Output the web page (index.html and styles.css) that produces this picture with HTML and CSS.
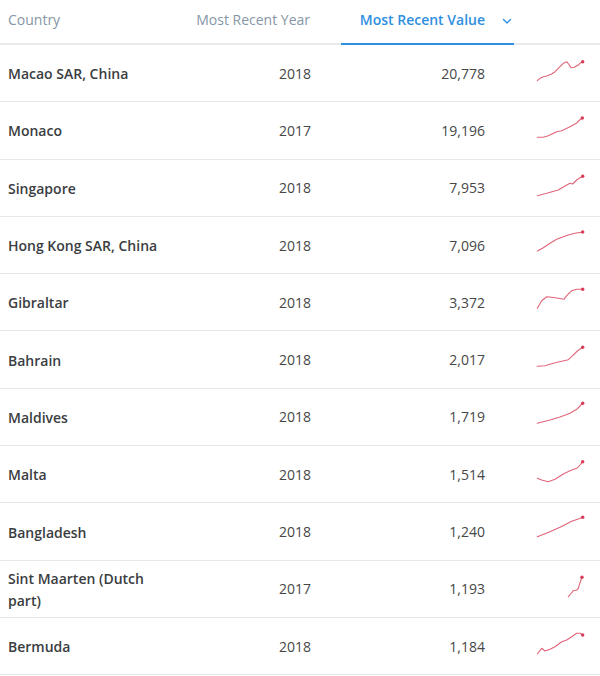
FILE: index.html
```html
<!DOCTYPE html>
<html lang="en">
<head>
<meta charset="utf-8">
<title>Most Recent Value</title>
<link rel="stylesheet" href="styles.css">
</head>
<body>
<div class="table">
  <div class="row head">
    <div class="cell country-h">Country</div>
    <div class="cell year-h">Most Recent Year</div>
    <div class="cell value-h active">Most Recent Value
      <svg class="chev" width="10" height="7" viewBox="0 0 10 7"><path d="M1.5 1.5l3.5 3.5 3.5-3.5" fill="none" stroke="#2f8fe0" stroke-width="1.4" stroke-linecap="round" stroke-linejoin="round"/></svg>
    </div>
    <div class="cell spark-h"></div>
  </div>

  <div class="row">
    <div class="cell country">Macao SAR, China</div>
    <div class="cell year">2018</div>
    <div class="cell value">20,778</div>
    <div class="cell spark"><svg viewBox="0 0 52 50" width="52" height="50"><polyline points="3.3,35.7 6,33.3 9.3,31.7 12.7,31 17.7,29 21,26.7 24.3,23.3 29.3,18.3 32.7,16.7 35.3,20 37,22.7 40.3,22.3 44.3,20 46,18.3 48.7,16.7"/><circle cx="48.7" cy="16.7" r="1.7"/></svg></div>
  </div>
  <div class="row">
    <div class="cell country">Monaco</div>
    <div class="cell year">2017</div>
    <div class="cell value">19,196</div>
    <div class="cell spark"><svg viewBox="0 0 52 50" width="52" height="50"><polyline points="3.3,35.3 9.3,35.3 14.3,33.7 22.7,29.7 27.7,28.7 36,24.7 42.7,21 46,17.7 48.3,16"/><circle cx="48.3" cy="16" r="1.7"/></svg></div>
  </div>
  <div class="row">
    <div class="cell country">Singapore</div>
    <div class="cell year">2018</div>
    <div class="cell value">7,953</div>
    <div class="cell spark"><svg viewBox="0 0 52 50" width="52" height="50"><polyline points="3.3,35.7 12.7,33.3 24.3,30 31,26 36,23.3 38.7,24 42.7,20 46,17.7 48.7,16.3"/><circle cx="48.7" cy="16.3" r="1.7"/></svg></div>
  </div>
  <div class="row">
    <div class="cell country">Hong Kong SAR, China</div>
    <div class="cell year">2018</div>
    <div class="cell value">7,096</div>
    <div class="cell spark"><svg viewBox="0 0 52 50" width="52" height="50"><polyline points="3.3,34 9.3,30.7 16,26.3 22.7,22.3 29.3,19.7 34.3,18 41,16.3 48.7,15"/><circle cx="48.7" cy="15" r="1.7"/></svg></div>
  </div>
  <div class="row">
    <div class="cell country">Gibraltar</div>
    <div class="cell year">2018</div>
    <div class="cell value">3,372</div>
    <div class="cell spark"><svg viewBox="0 0 52 50" width="52" height="50"><polyline points="3.3,34.3 7.7,26.7 12.7,22.7 17.7,23.3 24.3,24.3 30,25.3 32.7,21.7 37.7,16.7 42.7,15.3 48.7,15.3"/><circle cx="48.7" cy="15.3" r="1.7"/></svg></div>
  </div>
  <div class="row">
    <div class="cell country">Bahrain</div>
    <div class="cell year">2018</div>
    <div class="cell value">2,017</div>
    <div class="cell spark"><svg viewBox="0 0 52 50" width="52" height="50"><polyline points="3.3,35.3 11,34.7 19.3,32.3 27.7,30.3 34.3,28.7 38.7,24.7 43.3,20 48.7,16.3"/><circle cx="48.7" cy="16.3" r="1.7"/></svg></div>
  </div>
  <div class="row">
    <div class="cell country">Maldives</div>
    <div class="cell year">2018</div>
    <div class="cell value">1,719</div>
    <div class="cell spark"><svg viewBox="0 0 52 50" width="52" height="50"><polyline points="3.3,34.3 16,31 26,28 36,24.3 42.7,20.3 46,17 48.7,14.3"/><circle cx="48.7" cy="14.3" r="1.7"/></svg></div>
  </div>
  <div class="row">
    <div class="cell country">Malta</div>
    <div class="cell year">2018</div>
    <div class="cell value">1,514</div>
    <div class="cell spark"><svg viewBox="0 0 52 50" width="52" height="50"><polyline points="3.3,32.3 7.7,34 14.3,35.7 21,33.3 29.3,28 36,24.7 43.3,22 46,19 48.7,15.7"/><circle cx="48.7" cy="15.7" r="1.7"/></svg></div>
  </div>
  <div class="row">
    <div class="cell country">Bangladesh</div>
    <div class="cell year">2018</div>
    <div class="cell value">1,240</div>
    <div class="cell spark"><svg viewBox="0 0 52 50" width="52" height="50"><polyline points="3.3,33.7 16,28.7 26,24.3 37.7,18.3 44.3,16 48.7,14.3"/><circle cx="48.7" cy="14.3" r="1.7"/></svg></div>
  </div>
  <div class="row">
    <div class="cell country">Sint Maarten (Dutch part)</div>
    <div class="cell year">2017</div>
    <div class="cell value">1,193</div>
    <div class="cell spark"><svg viewBox="0 0 52 50" width="52" height="50"><polyline points="34.3,35.7 36.7,33 39.3,29.7 42.7,29 44.3,27.3 46,21.7 48,16.3"/><circle cx="48" cy="16.3" r="1.7"/></svg></div>
  </div>
  <div class="row">
    <div class="cell country">Bermuda</div>
    <div class="cell year">2018</div>
    <div class="cell value">1,184</div>
    <div class="cell spark"><svg viewBox="0 0 52 50" width="52" height="50"><polyline points="3.3,36 7.7,30.3 11,33 16,31.3 21,28.7 27.7,23.7 32.7,22 37.7,18.7 42.7,15.3 46,15.3 48.7,17"/><circle cx="48.7" cy="17" r="1.7"/></svg></div>
  </div>
</div>
</body>
</html>
```
FILE: styles.css
```css
html, body {
  margin: 0;
  padding: 0;
  background: #ffffff;
}

body {
  font-family: "Open Sans", "Noto Sans", "Liberation Sans", sans-serif;
  font-size: 14px;
  color: #333333;
}

.table {
  width: 600px;
}

.row {
  display: grid;
  grid-template-columns: 170px 171px 173px 86px;
  min-height: 56.3px;
  border-bottom: 1px solid #e6e8ea;
  align-items: center;
}

.row.head {
  min-height: 0;
  border-bottom: none;
  align-items: stretch;
}

.head .cell {
  box-sizing: border-box;
  height: 45px;
  padding-top: 10px;
  line-height: 20px;
  border-bottom: 2px solid #e7e9ec;
  color: #8696a6;
}

.country-h {
  padding-left: 8px;
}

.year-h {
  text-align: right;
  padding-right: 31px;
}

.value-h {
  display: flex;
  justify-content: flex-end;
  align-items: flex-start;
  padding-right: 2px;
  gap: 17px;
}

.head .active {
  color: #2f8fe0;
  font-weight: 600;
  border-bottom-color: #2f8fe0;
}

.chev {
  display: block;
  margin-top: 8px;
}

.country {
  padding: 2px 4px 0 8px;
  font-weight: 600;
  line-height: 22px;
  color: #3a3d41;
}

.year {
  text-align: right;
  padding-right: 30px;
  color: #474747;
}

.value {
  text-align: right;
  padding-right: 29px;
  color: #474747;
}

.spark {
  padding-left: 20px;
  align-self: start;
}

.spark svg {
  display: block;
}

.spark polyline {
  fill: none;
  stroke: #e06579;
  stroke-width: 1.1;
  stroke-linejoin: round;
  stroke-linecap: round;
}

.spark circle {
  fill: #d93a55;
}
```
